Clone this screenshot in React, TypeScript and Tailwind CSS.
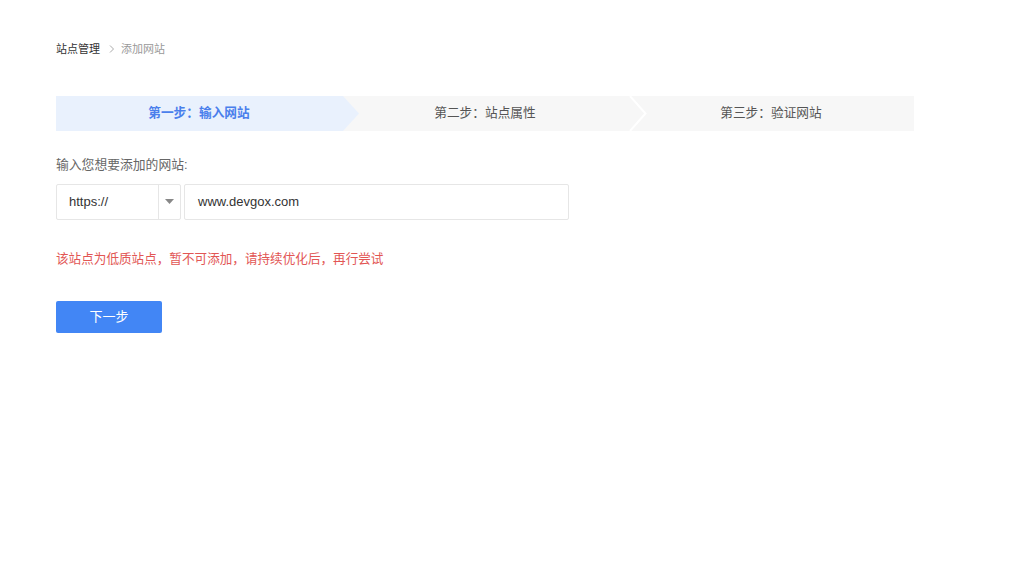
import React from 'react';

const font = { fontFamily: '"Liberation Sans", "Noto Sans CJK SC", sans-serif' };

export default function App() {
  return (
    <div className="min-h-[582px] w-[1024px] bg-white pl-[56px] pt-[41px]" style={font}>
      {/* breadcrumb */}
      <div className="flex items-center text-[11px] leading-[16px]">
        <span className="text-[#333]">站点管理</span>
        <svg className="ml-[8px] mr-[5px]" width="8" height="10" viewBox="0 0 8 10">
          <path d="M2 1.5 L5.5 5 L2 8.5" fill="none" stroke="#aaa" strokeWidth="1" />
        </svg>
        <span className="text-[#999]">添加网站</span>
      </div>

      {/* steps */}
      <div className="relative mt-[39px] grid h-[35px] w-[858px] grid-cols-3 bg-[#f7f7f7] text-[12.7px]">
        <div className="flex items-center justify-center bg-[#e9f1fd] font-bold text-[#4a7fec]">第一步：输入网站</div>
        <div className="flex items-center justify-center text-[#555]">第二步：站点属性</div>
        <div className="flex items-center justify-center text-[#555]">第三步：验证网站</div>
        <svg className="absolute left-[286px] top-0" width="18" height="35" viewBox="0 0 18 35">
          <polygon points="0,0 1,0 17,17.5 1,35 0,35" fill="#e9f1fd" />
        </svg>
        <svg className="absolute left-[573px] top-0" width="18" height="35" viewBox="0 0 18 35">
          <polyline points="1,0 16.5,17.5 1,35" fill="none" stroke="#ffffff" strokeWidth="2" />
        </svg>
      </div>

      {/* form */}
      <div className="mt-[26px] text-[12.8px] leading-[16px] text-[#666]">输入您想要添加的网站:</div>
      <div className="mt-[11px] flex h-[36px] gap-[3px]">
        <div className="flex w-[125px] items-center rounded-[2px] border border-[#e6e6e6]">
          <span className="flex-1 pl-[12px] text-[13px] text-[#333]">https://</span>
          <div className="flex h-full w-[22px] items-center justify-center border-l border-[#e6e6e6]">
            <svg width="9" height="6" viewBox="0 0 9 6">
              <polygon points="0,0 9,0 4.5,5" fill="#888" />
            </svg>
          </div>
        </div>
        <div className="flex w-[385px] items-center rounded-[2px] border border-[#e6e6e6] pl-[13px] text-[13px] text-[#333]">
          www.devgox.com
        </div>
      </div>

      <div className="mt-[31px] text-[12.6px] leading-[16px] text-[#e25654]">
        该站点为低质站点，暂不可添加，请持续优化后，再行尝试
      </div>

      <button className="mt-[34px] flex h-[32px] w-[106px] items-center justify-center rounded-[2px] bg-[#4286f5] text-[13px] text-white">
        下一步
      </button>
    </div>
  );
}
